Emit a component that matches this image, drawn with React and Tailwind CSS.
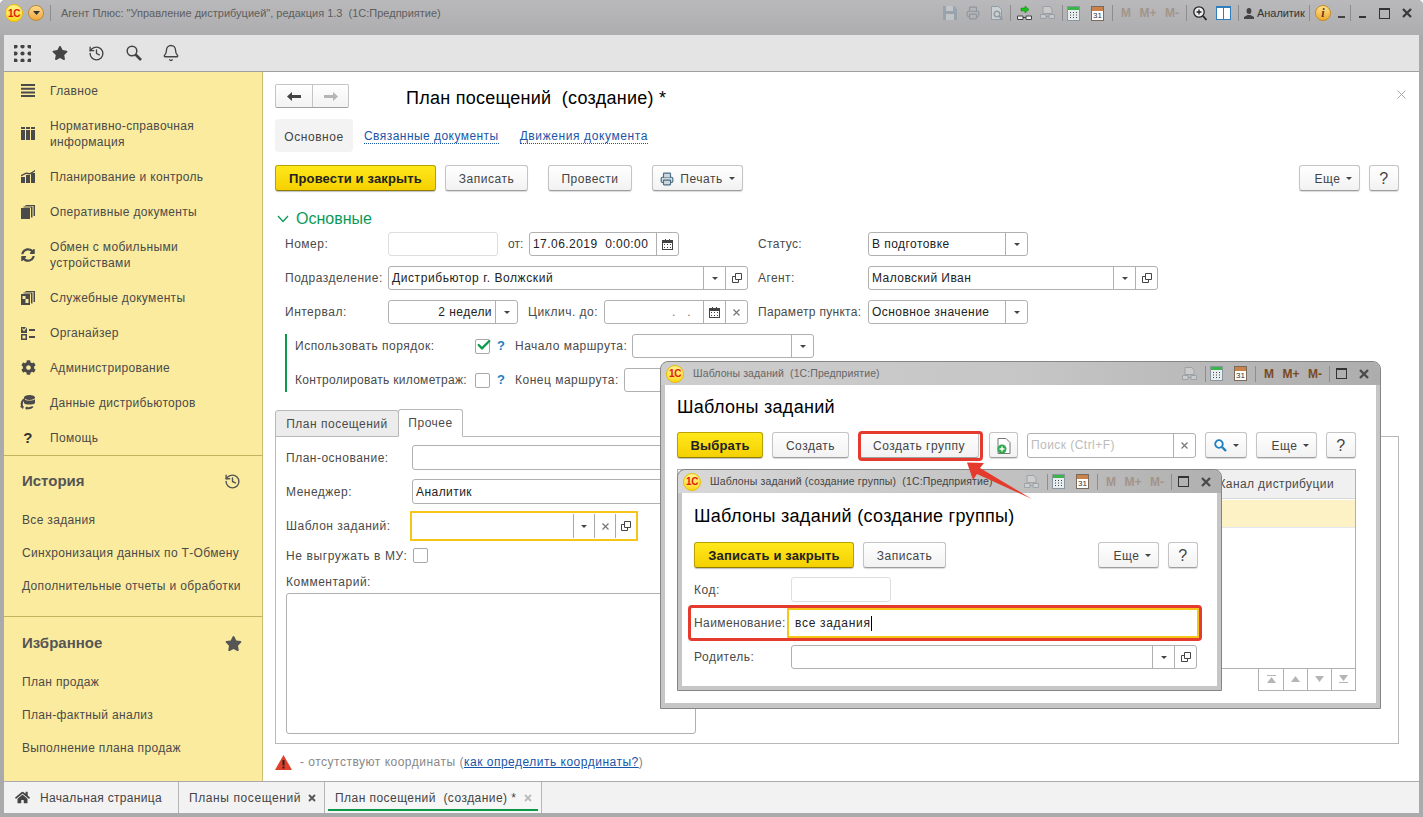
import React from 'react';
import { Check, Printer, History, Bell } from 'lucide-react';
import { FaCog, FaHome, FaStar, FaSyncAlt } from 'react-icons/fa';

const FONT = "font-['Liberation_Sans',Arial,sans-serif]";

const Logo = () => (
  <div className="w-[18px] h-[18px] shrink-0 rounded-full bg-gradient-to-b from-[#fff38a] to-[#ffd800] border border-[#e8bc00] flex items-center justify-center font-bold text-[10px] text-[#e0200f] tracking-[-0.5px]">
    1С
  </div>
);

const Arrow = () => (
  <svg className="w-[6px] h-[3px]" viewBox="0 0 6 3"><path d="M0 0h6L3 3z" fill="#444" /></svg>
);

const OpenIcon = () => (
  <svg className="w-[10px] h-[10px]" viewBox="0 0 10 10" fill="none" stroke="#444"><path d="M3.5.5h6v6h-6z" /><path d="M3.5 3.500h-3v6h6v-3" /></svg>
);

const Cal = () => (
  <svg className="w-[11px] h-[11px]" viewBox="0 0 11 11"><path d="M0 1h11v10H0z" fill="#444" /><path d="M1 4h9v6H1z" fill="#fff" /><path d="M2 5h1v1H2zM5 5h1v1H5zM8 5h1v1H8zM2 8h1v1H2zM5 8h1v1H5zM8 8h1v1H8z" fill="#444" /><path d="M3 0h1v2H3zM7 0h1v2H7z" fill="#444" /></svg>
);

const SmallX = () => (
  <svg width="7" height="7" viewBox="0 0 7 7" stroke="#777" strokeWidth="1.200"><path d="M.5.5l6 6M6.500.5l-6 6" /></svg>
);

const CloseX = ({ color = '#3a3a3a' }) => (
  <svg width="10" height="10" viewBox="0 0 10 10" stroke={color} strokeWidth="2.300" className="shrink-0"><path d="M1 1l8 8M9 1L1 9" /></svg>
);

const Sep = ({ ml }) => <div className={`${ml} w-px h-[16px] bg-[#8d8d8d] shrink-0`} />;

const Btn = ({ w, primary, children, className = '' }) => (
  <div className={`${w} ${className} shrink-0 h-[26px] pt-[1px] rounded-[3px] border flex items-center justify-center gap-[6px] ${primary ? 'bg-gradient-to-b from-[#ffe81a] to-[#f5d000] border-[#b9a200] border-b-[#8f7d00] font-bold text-[13px] tracking-[0.15px] text-[#222] shadow-[0_1px_1px_rgba(0,0,0,0.25)]' : 'bg-gradient-to-b from-white to-[#f2f2f2] border-[#c4c4c4] border-b-[#9e9e9e] tracking-[0.5px] text-[#444] shadow-[0_1px_1px_rgba(0,0,0,0.15)]'}`}>
    {children}
  </div>
);

// поле ввода с кнопками справа
const Field = ({ w, h = 'h-[24px]', value, right, btns = [], disabled, className = '', placeholder }) => (
  <div className={`${w} ${h} ${className} shrink-0 flex items-stretch bg-white border ${disabled ? 'border-[#dedede]' : 'border-[#b0b0b0]'} rounded-[3px]`}>
    <div className={`flex-1 min-w-0 px-[3px] flex items-center text-[12px] tracking-[0.45px] ${placeholder ? 'text-[#bbb]' : 'text-[#222]'} ${right ? 'justify-end' : ''} whitespace-pre overflow-hidden`}>{value || placeholder}</div>
    {btns.map((b, i) => (
      <div key={i} className="w-[22px] shrink-0 border-l border-[#b0b0b0] flex items-center justify-center">{b}</div>
    ))}
  </div>
);

const Label = ({ w, children, className = 'tracking-[0.5px]' }) => (
  <div className={`${w} ${className} shrink-0 text-[12px] text-[#4a4a4a] whitespace-nowrap`}>{children}</div>
);

const Box = ({ checked }) => (
  <div className="w-[15px] h-[15px] shrink-0 border border-[#a8a8a8] rounded-[2px] bg-white relative">
    {checked && <Check size={16} strokeWidth={3.4} className="absolute -top-[3px] left-0 text-[#0b9a4a]" />}
  </div>
);

const MenuIcon = ({ kind }) => {
  const c = '#4a4a4a';
  if (kind === 'main') return <svg width="14" height="13" viewBox="0 0 14 13" fill={c}><path d="M0 0h14v2H0zM0 3.700h14v2H0zM0 7.400h14v2H0zM0 11h14v2H0z" /></svg>;
  if (kind === 'nsi') return <svg width="14" height="13" viewBox="0 0 14 13" fill={c}><path d="M0 0h4v2H0zM5 0h4v2H5zM10 0h4v2h-4zM0 3h4v10H0zM5 3h4v10H5zM10 3h4v10h-4z" /></svg>;
  if (kind === 'plan') return <svg width="14" height="13" viewBox="0 0 14 13" fill={c}><path d="M0 7h4v6H0zM5 5h4v8H5zM10 3h4v10h-4zM0 5l5-2.500 4 .5 5-3v1.500L9 4.500 5 4 0 6.500z" /></svg>;
  if (kind === 'docs') return <svg width="14" height="14" viewBox="0 0 14 14" fill={c}><path d="M0 3h9v11H0zM2.500 1.500h9v11h-1.500V2.500H2.500zM4.500 0H14v11h-1.500V1H4.500z" /></svg>;
  if (kind === 'srv') return <svg width="14" height="14" viewBox="0 0 14 14" fill={c}><path fillRule="evenodd" d="M0 3h9v11H0zM1.500 5v3h3V5zM4.500 8v4h3V8z" /><path d="M2.500 1.500h9v11h-1.500V2.500H2.500zM4.500 0H14v11h-1.500V1H4.500z" /></svg>;
  if (kind === 'org') return <svg width="14" height="14" viewBox="0 0 14 14" fill={c}><path d="M0 1h6v6H0zM0 8h6v6H0zM8 3h6v2H8zM8 10h6v2H8z" /><path d="M1.500 9.500h3v3h-3z" fill="#fbeb9e" /><path d="M1.500 2.500l1.500 2 3-4" stroke="#fbeb9e" strokeWidth="1.200" fill="none" /></svg>;
  if (kind === 'sync') return <FaSyncAlt size={14} color={c} />;
  if (kind === 'admin') return <FaCog size={15} color={c} />;
  if (kind === 'dist') return <svg width="16" height="15" viewBox="0 0 16 15" fill={c}><ellipse cx="9.500" cy="2.500" rx="5.500" ry="2.500" /><path d="M4 4c1 2 10 2 11 0v4c-1 2-10 2-11 0z" /><path d="M5 3C2 4 0 7 1 11l-1 .5L3 14l1-3-1 .5C2.500 8 3 6 5 5.500zM12 11c-1 1-3 1.500-5 1l.5-1L5 13l2 2 .5-1c2 .5 4 0 6-2z" /></svg>;
  return <span className="text-[15px] font-bold text-[#333] leading-none">?</span>;
};

const menu = [
  ['main', 'Главное'],
  ['nsi', 'Нормативно-справочная информация', true],
  ['plan', 'Планирование и контроль'],
  ['docs', 'Оперативные документы'],
  ['sync', 'Обмен с мобильными устройствами', true],
  ['srv', 'Служебные документы'],
  ['org', 'Органайзер'],
  ['admin', 'Администрирование'],
  ['dist', 'Данные дистрибьюторов'],
  ['help', 'Помощь'],
];

const Sidebar = () => (
  <aside className="w-[259px] shrink-0 bg-[#fbeb9e] border-r border-[#cdbd72] flex flex-col text-[12px] tracking-[0.33px] text-[#4a4a4a]">
    <div className="pt-[1px] border-b border-[#c4b35e]">
      {menu.map(([k, t, two]) => (
        <div key={k} className={`${two ? 'h-[51px]' : 'h-[35px]'} flex items-center`}>
          <div className="w-[46px] pl-[2px] shrink-0 flex justify-center"><MenuIcon kind={k} /></div>
          <div className="w-[190px] leading-[16px]">{t}</div>
        </div>
      ))}
    </div>
    <div className="h-[161px] border-b border-[#c4b35e]">
      <div className="h-[47px] pt-[3px] pl-[18px] pr-[21px] flex items-center justify-between">
        <span className="text-[15px] font-bold text-[#555] tracking-normal">История</span>
        <History size={17} strokeWidth={2} color="#555" />
      </div>
      {['Все задания', 'Синхронизация данных по Т-Обмену', 'Дополнительные отчеты и обработки'].map((t) => (
        <div key={t} className="h-[33px] pl-[18px] flex items-center whitespace-nowrap">{t}</div>
      ))}
    </div>
    <div className="flex-1">
      <div className="h-[48px] pt-[5px] pl-[18px] pr-[20px] flex items-center justify-between">
        <span className="text-[15px] font-bold text-[#555] tracking-normal">Избранное</span>
        <FaStar size={17} color="#555" />
      </div>
      {['План продаж', 'План-фактный анализ', 'Выполнение плана продаж'].map((t) => (
        <div key={t} className="h-[33px] pl-[18px] flex items-center whitespace-nowrap">{t}</div>
      ))}
    </div>
  </aside>
);

const CalcIcon = ({ className = '' }) => (
  <svg width="13" height="15" viewBox="0 0 13 15" className={`${className} shrink-0`}><path d="M0 0h13v15H0z" fill="#8a97a0" /><path d="M1 1h11v3H1z" fill="#39b54a" /><path d="M1 4h11v10H1z" fill="#e8edf0" /><path d="M3 6h1v1H3zM6 6h1v1H6zM9 6h1v1H9zM3 8.500h1v1H3zM6 8.500h1v1H6zM9 8.500h1v1H9zM3 11h1v1H3zM6 11h1v1H6zM9 11h1v1H9z" fill="#444" /></svg>
);

const Cal31 = ({ className = '' }) => (
  <div className={`${className} w-[13px] h-[15px] border border-[#7a6a5c] bg-white shrink-0`}>
    <div className="h-[4px] bg-[#c8824a]" />
    <div className="text-[8px] leading-[10px] text-center text-[#333]">31</div>
  </div>
);

const Tray = ({ className = '' }) => (
  <svg width="15" height="14" viewBox="0 0 15 14" className={`${className} shrink-0 opacity-50`}><path d="M3 .5h7l2 3v4H3z" fill="#ddd" stroke="#7f8c96" /><path d="M.5 8.500h5.500v4H.5zM9 8.500h5.500v4H9z" fill="#ddd" stroke="#7f8c96" /><path d="M6 10.500h3" stroke="#7f8c96" /></svg>
);

const TitleTools = () => (
  <div className="flex items-center text-[#555]">
    <svg width="14" height="14" viewBox="0 0 14 14" className="opacity-40 shrink-0"><path d="M0 0h11l3 3v11H0z" fill="#6d8aa0" /><path d="M3 0h7v5H3zM3 8h8v6H3z" fill="#d8dde0" /></svg>
    <Printer size={14} strokeWidth={2} className="ml-[9px] text-[#7f8c96] opacity-70 shrink-0" />
    <svg width="14" height="14" viewBox="0 0 14 14" fill="none" stroke="#84929c" className="ml-[10px] opacity-70 shrink-0"><path d="M1.500.5h7l3 3v10h-10z" fill="#d8dde0" /><circle cx="7" cy="8" r="2.800" strokeWidth="1.500" /><path d="M9 10l3.500 3.500" strokeWidth="2" /></svg>
    <Sep ml="ml-[6px]" />
    <svg width="15" height="15" viewBox="0 0 15 15" className="ml-[6px] shrink-0"><path d="M4 2h4V0l4 3.500L8 7V5H4z" fill="#16c416" stroke="#0a7a0a" strokeWidth=".5" /><path d="M.5 10h5.500v3.500H.5zM9 10h5.500v3.500H9z" fill="#eee" stroke="#444" /><path d="M6 11.500h3" stroke="#444" /></svg>
    <Tray className="ml-[8px]" />
    <Sep ml="ml-[7px]" />
    <CalcIcon className="ml-[4px]" />
    <Cal31 className="ml-[11px]" />
    <Sep ml="ml-[8px]" />
    <div className="ml-[8px] w-[58px] flex justify-between text-[12px] font-bold text-[#a39489]"><span>M</span><span>M+</span><span>M-</span></div>
    <Sep ml="ml-[7px]" />
    <svg width="14" height="15" viewBox="0 0 14 15" fill="none" stroke="#222" className="ml-[6px] shrink-0"><circle cx="6" cy="6" r="5.200" fill="#eee" strokeWidth="1.300" /><path d="M6 3.500v5M3.500 6h5" strokeWidth="1.300" /><path d="M10 10l3.500 4" strokeWidth="1.800" /></svg>
    <svg width="15" height="14" viewBox="0 0 15 14" className="ml-[9px] shrink-0"><path d="M0 0h15v14H0z" fill="#2f7fc0" /><path d="M1 2h6v11H1zM8 2h6v11H8z" fill="#fff" /></svg>
    <Sep ml="ml-[7px]" />
    <svg width="10" height="11" viewBox="0 0 10 11" fill="#444" className="ml-[5px] shrink-0"><ellipse cx="5" cy="3" rx="2.400" ry="3" /><path d="M0 11V9l3.500-2h3L10 9v2z" /></svg>
    <span className="ml-[3px] w-[47px] text-[11px] text-[#333] tracking-[-0.05px] whitespace-nowrap">Аналитик</span>
    <Sep ml="ml-[5px]" />
    <div className="ml-[5px] w-[16px] h-[16px] shrink-0 rounded-full bg-gradient-to-b from-[#ffe08a] to-[#f0a92a] border border-[#c98a1c] flex items-center justify-center text-[12px] font-bold italic font-['Liberation_Serif',serif] text-[#5a3a10]">i</div>
    <div className="ml-[7px] w-[7px] h-[2px] bg-[#444] mt-[8px] shrink-0" />
    <Sep ml="ml-[5px]" />
    <div className="ml-[8px] w-[7px] h-[2px] bg-[#333] mt-[8px] shrink-0" />
    <div className="ml-[13px] w-[11px] h-[11px] border border-[#333] border-t-2 shrink-0" />
    <div className="ml-[12px]"><CloseX /></div>
  </div>
);

const WinTools = ({ active }) => (
  <div className="flex items-center">
    <Tray />
    <Sep ml="ml-[8px]" />
    <CalcIcon className="ml-[4px]" />
    <Cal31 className="ml-[11px]" />
    <Sep ml="ml-[8px]" />
    <div className={`ml-[8px] w-[58px] flex justify-between text-[12px] font-bold ${active ? 'text-[#7a4a1e]' : 'text-[#a39489]'}`}><span>M</span><span>M+</span><span>M-</span></div>
    <Sep ml="ml-[7px]" />
    <div className="ml-[6px] w-[11px] h-[11px] border border-[#333] border-t-2 shrink-0" />
    <div className="ml-[12px]"><CloseX color="#4a4a4a" /></div>
  </div>
);

const ArrowBtns = () => (
  <div className="flex h-[22px] border border-[#b0b0b0] border-t-0 bg-white">
    {['M0 0h9v1H0zM4.500 2L9 8H0z', 'M4.500 1L9 7H0z', 'M0 1h9L4.500 7z', 'M0 0h9L4.500 6zM0 7h9v1H0z'].map((d, i) => (
      <div key={i} className={`w-[24px] flex items-center justify-center ${i ? 'border-l border-[#b0b0b0]' : ''}`}>
        <svg width="9" height="9" viewBox="0 0 9 9"><path d={d} fill="#b5b5b5" /></svg>
      </div>
    ))}
  </div>
);

const FormRows = () => (
  <div className="flex flex-col gap-[10px] pl-[10px]">
    <div className="flex items-center">
      <Label w="w-[103px]">Номер:</Label>
      <Field w="w-[110px]" disabled />
      <Label w="w-[31px]" className="pl-[10px]">от:</Label>
      <Field w="w-[150px]" value="17.06.2019  0:00:00" btns={[<Cal key="c" />]} />
      <Label w="w-[110px]" className="ml-[79px] tracking-[0.4px]">Статус:</Label>
      <Field w="w-[160px]" value="В подготовке" btns={[<Arrow key="a" />]} />
    </div>
    <div className="flex items-center">
      <Label w="w-[103px]">Подразделение:</Label>
      <Field w="w-[360px]" value={<span className="tracking-[0.58px]">Дистрибьютор г. Волжский</span>} btns={[<Arrow key="a" />, <OpenIcon key="o" />]} />
      <Label w="w-[110px]" className="ml-[10px] tracking-[0.4px]">Агент:</Label>
      <Field w="w-[290px]" value="Маловский Иван" btns={[<Arrow key="a" />, <OpenIcon key="o" />]} />
    </div>
    <div className="flex items-center">
      <Label w="w-[103px]">Интервал:</Label>
      <Field w="w-[130px]" value="2 недели" right btns={[<Arrow key="a" />]} />
      <Label w="w-[86px]" className="pl-[10px] tracking-[0.5px]">Циклич. до:</Label>
      <Field w="w-[144px]" value={<span className="pl-[64px] text-[#777]">.   .</span>} btns={[<Cal key="c" />, <SmallX key="x" />]} />
      <Label w="w-[110px]" className="ml-[10px] tracking-[0.3px]">Параметр пункта:</Label>
      <Field w="w-[160px]" value="Основное значение" btns={[<Arrow key="a" />]} />
    </div>
    <div className="h-[58px] border-l-2 border-[#0b9a4a] pl-[8px] flex flex-col justify-between -mb-[1px]">
      <div className="flex items-center h-[24px]">
        <Label w="w-[180px]">Использовать порядок:</Label>
        <Box checked />
        <span className="w-[25px] pl-[7px] text-[13px] font-bold text-[#1f7fc0]">?</span>
        <Label w="w-[117px]">Начало маршрута:</Label>
        <Field w="w-[182px]" btns={[<Arrow key="a" />]} />
      </div>
      <div className="flex items-center h-[24px]">
        <Label w="w-[180px]" className="tracking-[0.3px]">Контролировать километраж:</Label>
        <Box />
        <span className="w-[25px] pl-[7px] text-[13px] font-bold text-[#1f7fc0]">?</span>
        <Label w="w-[109px]">Конец маршрута:</Label>
        <Field w="w-[190px]" />
      </div>
    </div>
  </div>
);

const OtherTab = () => (
  <div className="h-[308px] w-[1124px] shrink-0 border border-[#b8b8b8] bg-white pl-[10px] pt-[8px]">
    <div className="flex items-center h-[25px]">
      <Label w="w-[126px]">План-основание:</Label>
      <Field w="w-[284px]" h="h-[25px]" />
    </div>
    <div className="flex items-center h-[25px] mt-[9px]">
      <Label w="w-[126px]">Менеджер:</Label>
      <Field w="w-[284px]" h="h-[25px]" value="Аналитик" />
    </div>
    <div className="flex items-center h-[30px] mt-[7px]">
      <Label w="w-[124px]">Шаблон заданий:</Label>
      <div className="w-[228px] h-[30px] border-2 border-[#f5c518] flex items-center justify-end">
        {[<Arrow key="a" />, <SmallX key="x" />, <OpenIcon key="o" />].map((b) => (
          <div key={b.key} className="w-[21px] h-[24px] border-l border-[#aaa] flex items-center justify-center">{b}</div>
        ))}
      </div>
    </div>
    <div className="flex items-center h-[15px] mt-[7px]">
      <Label w="w-[127px]" className="tracking-[0.6px]">Не выгружать в МУ:</Label>
      <Box />
    </div>
    <Label w="w-[200px]" className="mt-[12px] leading-[14px] tracking-[0.5px]">Комментарий:</Label>
    <div className="w-[410px] h-[141px] mt-[4px] border border-[#b0b0b0] rounded-[3px]" />
  </div>
);

const ListWindow = () => (
  <div className="absolute left-[660px] top-[361px] w-[721px] h-[348px] bg-[#c6c6c6] border border-[#858585] rounded-t-[8px] flex flex-col pl-[4px] pr-[4px] pb-[5px]">
    <div className="h-[23px] shrink-0 -mx-[4px] pl-[5px] pr-[11px] rounded-t-[8px] bg-gradient-to-r from-[#cdcdcd] via-[#c6c6c6] to-[#adadad] flex items-center justify-between">
      <div className="flex items-center gap-[9px]">
        <Logo />
        <span className="text-[10.5px] text-[#666] tracking-[0.1px] whitespace-pre">Шаблоны заданий  (1С:Предприятие)</span>
      </div>
      <WinTools active />
    </div>
    <div className="flex-1 bg-white pl-[12px] pr-[20px] flex flex-col">
      <div className="h-[37px] shrink-0 flex items-end text-[18px] text-black tracking-[0.3px] leading-[30px]">Шаблоны заданий</div>
      <div className="mt-[10px] flex items-center h-[26px] shrink-0 text-[12px]">
        <Btn w="w-[86px]" primary>Выбрать</Btn>
        <Btn w="w-[77px]" className="ml-[9px]">Создать</Btn>
        <div className="ml-[10px] relative">
          <Btn w="w-[120px]">Создать группу</Btn>
          <div className="absolute -left-[1px] -top-[1px] w-[125px] h-[30px] rounded-[4px] border-[3px] border-[#e53a2e]" />
        </div>
        <Btn w="w-[29px]" className="ml-[10px]">
          <svg width="14" height="16" viewBox="0 0 14 16"><path d="M1 .5h8l4 4v11H1z" fill="#fff" stroke="#777" /><circle cx="5" cy="11" r="4.500" fill="#2fa84f" /><path d="M5 8.500v5M2.500 11h5" stroke="#fff" strokeWidth="1.400" /></svg>
        </Btn>
        <Field w="w-[169px]" h="h-[25px]" className="ml-[9px]" placeholder="Поиск (Ctrl+F)" btns={[<SmallX key="x" />]} />
        <Btn w="w-[42px]" className="ml-[9px]">
          <svg width="13" height="13" viewBox="0 0 13 13" fill="none" stroke="#1f7fc0"><circle cx="5" cy="5" r="3.800" strokeWidth="1.800" /><path d="M8 8l4 4" strokeWidth="2.400" /></svg>
          <Arrow />
        </Btn>
        <Btn w="w-[61px]" className="ml-[9px] pl-[8px]">Еще <Arrow /></Btn>
        <Btn w="w-[30px]" className="ml-[9px] text-[16px] text-[#222]">?</Btn>
      </div>
      <div className="mt-[11px] h-[200px] border border-[#b0b0b0] flex flex-col shrink-0">
        <div className="h-[29px] bg-[#f0f0f0] border-b border-[#d8d8d8] shrink-0 flex items-center justify-end pr-[21px] text-[12px] tracking-[0.4px] text-[#4a4a4a]">Канал дистрибуции</div>
        <div className="mt-[1px] h-[28px] bg-[#fdf1c6] border-b border-[#e4e8ee]" />
      </div>
      <div className="flex justify-end"><ArrowBtns /></div>
    </div>
  </div>
);

const GroupWindow = () => (
  <div className="absolute left-[677px] top-[469px] w-[545px] h-[222px] bg-[#c6c6c6] border border-[#858585] rounded-t-[8px] flex flex-col pl-[4px] pr-[4px] pb-[4px]">
    <div className="h-[23px] shrink-0 -mx-[4px] pl-[5px] pr-[10px] rounded-t-[8px] bg-gradient-to-r from-[#d8d8d8] via-[#c6c6c6] to-[#b0b0b0] flex items-center justify-between">
      <div className="flex items-center gap-[9px]">
        <Logo />
        <span className="text-[10.5px] text-[#444] tracking-[0.15px] whitespace-pre">Шаблоны заданий (создание группы)  (1С:Предприятие)</span>
      </div>
      <WinTools />
    </div>
    <div className="flex-1 bg-white pl-[12px] pr-[19px] text-[12px]">
      <div className="h-[38px] flex items-end text-[18px] text-black tracking-[0.3px] leading-[30px]">Шаблоны заданий (создание группы)</div>
      <div className="mt-[11px] flex items-center">
        <Btn w="w-[160px]" primary>Записать и закрыть</Btn>
        <Btn w="w-[83px]" className="ml-[9px]">Записать</Btn>
        <div className="flex-1" />
        <Btn w="w-[61px]" className="pl-[8px]">Еще <Arrow /></Btn>
        <Btn w="w-[30px]" className="ml-[9px] text-[16px] text-[#222]">?</Btn>
      </div>
      <div className="mt-[9px] flex items-center h-[25px]">
        <Label w="w-[97px]">Код:</Label>
        <Field w="w-[100px]" h="h-[25px]" disabled />
      </div>
      <div className="-ml-[6px] mt-[3px] w-[514px] h-[36px] border-[3px] border-[#e53a2e] rounded-[4px] flex items-center pl-[3px]">
        <Label w="w-[93px]" className="tracking-[0.4px]">Наименование:</Label>
        <div className="flex-1 h-[30px] border-2 border-[#f5c518] flex items-center pl-[6px] tracking-[0.7px] text-[#222]">
          все задания<span className="w-px h-[15px] bg-black" />
        </div>
      </div>
      <div className="mt-[4px] flex items-center h-[24px]">
        <Label w="w-[97px]">Родитель:</Label>
        <Field w="w-[406px]" btns={[<Arrow key="a" />, <OpenIcon key="o" />]} />
      </div>
    </div>
  </div>
);

const App = () => {
  return (
    <div className={`${FONT} w-[1423px] h-[817px] overflow-hidden relative rounded-t-[5px] bg-[#aaaaac] flex flex-col`}>
      {/* Заголовок окна */}
      <header className="h-[35px] shrink-0 bg-gradient-to-b from-[#b9b9bb] to-[#adadaf] pl-[5px] pr-[11px] pt-[4px] flex items-start justify-between">
        <div className="flex items-center">
          <Logo />
          <div className="ml-[5px] w-[16px] h-[16px] rounded-full bg-gradient-to-b from-[#ffd98a] to-[#f0a83a] border border-[#b98a3a] flex items-center justify-center"><svg width="7" height="4" viewBox="0 0 7 4"><path d="M0 0h7L3.500 4z" fill="#333" /></svg></div>
          <Sep ml="ml-[6px]" />
          <span className="ml-[10px] text-[11px] text-[#5e5e5e] whitespace-pre">Агент Плюс: "Управление дистрибуцией", редакция 1.3  (1С:Предприятие)</span>
        </div>
        <TitleTools />
      </header>

      <div className="flex-1 mx-[4px] mb-[4px] flex flex-col min-h-0 bg-white">
        {/* Панель инструментов */}
        <div className="h-[37px] shrink-0 bg-[#e4e4e4] border-b border-[#a0a0a0] flex items-center pl-[10px] text-[#444]">
          <svg width="17" height="17" viewBox="0 0 17 17" fill="#444">{[1.5, 8.5, 15.5].flatMap((y) => [1.5, 8.5, 15.5].map((x) => <circle key={`${x}-${y}`} cx={x} cy={y} r="2.100" />))}</svg>
          <FaStar size={16} className="ml-[21px]" />
          <History size={17} strokeWidth={1.9} className="ml-[20px]" />
          <svg width="16" height="16" viewBox="0 0 16 16" fill="none" stroke="#444" className="ml-[21px]"><circle cx="6" cy="6" r="4.800" strokeWidth="1.500" /><path d="M9.500 9.500l5.500 5.500" strokeWidth="2.600" /></svg>
          <Bell size={18} strokeWidth={1.8} className="ml-[20px]" />
        </div>

        <div className="flex-1 flex min-h-0">
          <Sidebar />
          <main className="flex-1 min-w-0 bg-white pl-[12px] pt-[12px] flex flex-col">
            <div className="flex items-start h-[24px] shrink-0">
              <div className="w-[74px] h-[24px] flex border border-[#c4c4c4] border-b-[#a0a0a0] rounded-[2px] bg-gradient-to-b from-white to-[#f2f2f2]">
                <div className="w-[37px] flex items-center justify-center border-r border-[#c4c4c4]"><svg width="14" height="9" viewBox="0 0 14 9"><path d="M0 4.500L5 0v3h9v3H5v3z" fill="#444" /></svg></div>
                <div className="flex-1 flex items-center justify-center"><svg width="14" height="9" viewBox="0 0 14 9"><path d="M14 4.500L9 0v3H0v3h9v3z" fill="#b5b5b5" /></svg></div>
              </div>
              <h1 className="ml-[57px] text-[18px] leading-[28px] font-normal text-black tracking-[0.25px] whitespace-pre">План посещений  (создание) *</h1>
              <div className="flex-1" />
              <svg width="9" height="9" viewBox="0 0 9 9" stroke="#aaa" className="mr-[13px] mt-[6px]"><path d="M.5.5l8 8M8.500.5l-8 8" /></svg>
            </div>
            <div className="mt-[11px] h-[33px] shrink-0 flex items-center text-[12px] tracking-[0.45px]">
              <div className="w-[78px] h-[33px] pt-[2px] bg-[#f3f3f3] rounded-[4px] flex items-center justify-center text-[#444] tracking-[0.55px]">Основное</div>
              <a className="ml-[11px] mt-[2px] text-[#1a56a8] border-b border-dotted border-[#1a56a8] leading-[13px]">Связанные документы</a>
              <a className="ml-[21px] mt-[2px] text-[#1a56a8] border-b border-dotted border-[#1a56a8] leading-[13px] tracking-[0.6px]">Движения документа</a>
            </div>
            <div className="mt-[13px] h-[26px] shrink-0 flex items-center text-[12px]">
              <Btn w="w-[161px]" primary>Провести и закрыть</Btn>
              <Btn w="w-[83px]" className="ml-[9px]">Записать</Btn>
              <Btn w="w-[84px]" className="ml-[20px]">Провести</Btn>
              <Btn w="w-[91px]" className="ml-[20px]"><Printer size={14} className="text-[#4a6f86]" fill="#cfd8de" /> Печать <Arrow /></Btn>
              <div className="flex-1" />
              <Btn w="w-[61px]" className="pl-[8px]">Еще <Arrow /></Btn>
              <Btn w="w-[30px]" className="ml-[9px] mr-[20px] text-[16px] text-[#222]">?</Btn>
            </div>
            <div className="mt-[19px] h-[18px] shrink-0 flex items-center text-[16px] text-[#0b9a57]">
              <svg width="12" height="8" viewBox="0 0 12 8" fill="none" stroke="#0b9a57" strokeWidth="1.300" className="ml-[2px]"><path d="M1 1l5 5.500L11 1" /></svg>
              <span className="ml-[7px]">Основные</span>
            </div>
            <div className="mt-[4px] shrink-0"><FormRows /></div>

            <div className="mt-[18px] h-[28px] shrink-0 flex items-end text-[12px] tracking-[0.5px] text-[#4a4a4a] -mb-px z-10">
              <div className="w-[124px] h-[27px] bg-[#ececec] border border-[#b8b8b8] rounded-t-[3px] flex items-center justify-center">План посещений</div>
              <div className="w-[65px] h-[28px] bg-white border border-[#b8b8b8] border-b-white rounded-t-[3px] flex items-center justify-center -ml-px">Прочее</div>
            </div>
            <OtherTab />
            <div className="mt-[9px] flex items-center text-[12px] text-[#888] tracking-[0.5px]">
              <svg width="17" height="15" viewBox="0 0 17 15"><path d="M8.500 0L17 15H0z" fill="#e0402a" /><path d="M7.500 5h2v5.500h-2zM7.500 11.500h2v2h-2z" fill="#222" /></svg>
              <span className="ml-[8px] whitespace-pre">- отсутствуют координаты (<a className="text-[#1a56a8] underline">как определить координаты?</a>)</span>
            </div>
          </main>
        </div>

        {/* Вкладки открытых окон */}
        <div className="h-[32px] shrink-0 bg-[#f2f2f2] border-t border-[#aaaaaa] flex text-[12px] text-[#444] tracking-[0.33px]">
          <div className="w-[175px] border-r border-[#b5b5b5] flex items-center pl-[11px]">
            <FaHome size={15} color="#444" />
            <span className="ml-[10px]">Начальная страница</span>
          </div>
          <div className="w-[146px] border-r border-[#b5b5b5] flex items-center pl-[10px] whitespace-nowrap tracking-[0.6px]">
            Планы посещений
            <svg width="8" height="8" viewBox="0 0 8 8" stroke="#555" strokeWidth="1.800" className="ml-[7px]"><path d="M1 1l6 6M7 1L1 7" /></svg>
          </div>
          <div className="w-[217px] border-r border-[#b5b5b5] bg-[#f6f6f6] flex items-center pl-[10px] relative whitespace-pre tracking-[0.45px]">
            План посещений  (создание) *
            <svg width="8" height="8" viewBox="0 0 8 8" stroke="#bbb" strokeWidth="1.800" className="ml-[8px]"><path d="M1 1l6 6M7 1L1 7" /></svg>
            <div className="absolute left-[3px] right-[3px] bottom-[2px] h-[2px] bg-[#0b9a4a]" />
          </div>
        </div>
      </div>

      <ListWindow />
      <GroupWindow />

      {/* Красная стрелка */}
      <svg className="absolute left-[960px] top-[455px]" width="80" height="50" viewBox="0 0 80 50">
        <path d="M7 7.500L24 8 20 13 72 44 17 19 13 25z" fill="#e53a2e" />
      </svg>
    </div>
  );
};

export default App;
